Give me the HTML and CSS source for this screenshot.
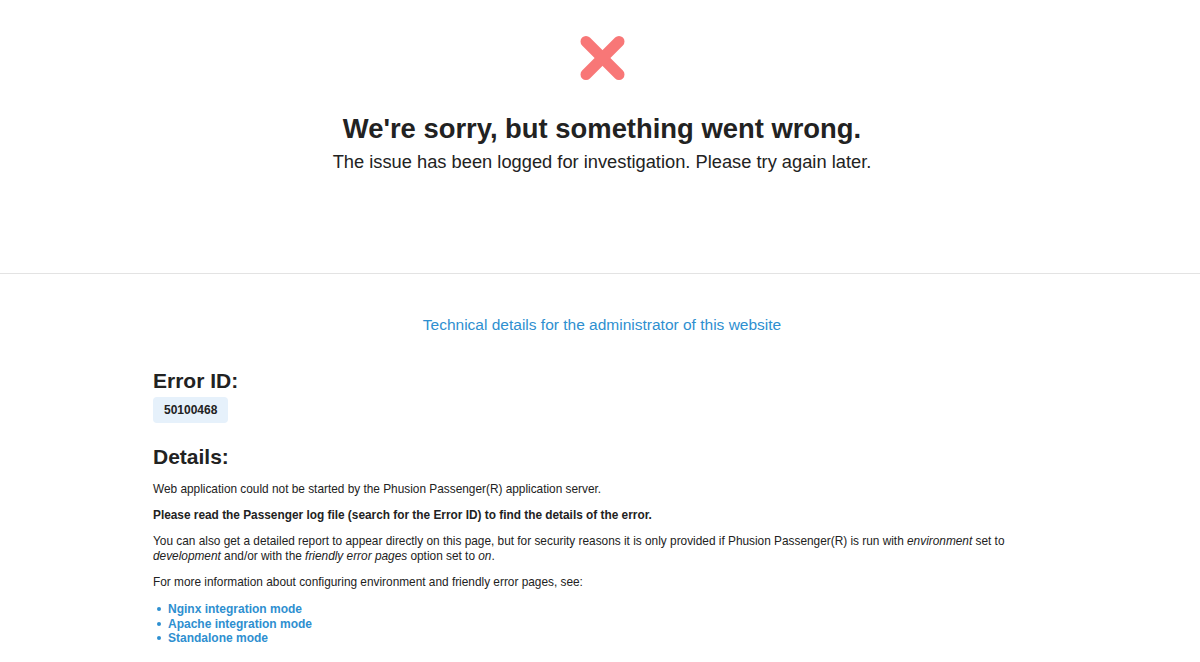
FILE: index.html
```html
<!DOCTYPE html>
<html lang="en">
<head>
<meta charset="utf-8">
<title>We're sorry, but something went wrong</title>
<link rel="stylesheet" href="styles.css">
</head>
<body>
<header class="top">
  <svg class="x-icon" width="48" height="46" viewBox="0 0 48 46" aria-hidden="true">
    <g stroke="#f87777" stroke-width="11" stroke-linecap="round">
      <line x1="8" y1="6.5" x2="41" y2="39.5"/>
      <line x1="41" y1="6.5" x2="8" y2="39.5"/>
    </g>
  </svg>
  <h1 class="title">We're sorry, but something went wrong.</h1>
  <p class="subtitle">The issue has been logged for investigation. Please try again later.</p>
</header>
<main class="tech">
  <p class="tech-link"><a href="#">Technical details for the administrator of this website</a></p>
  <div class="content">
    <h2 class="heading">Error ID:</h2>
    <span class="badge">50100468</span>
    <h2 class="heading details-heading">Details:</h2>
    <p class="para">Web application could not be started by the Phusion Passenger(R) application server.</p>
    <p class="para"><strong>Please read the Passenger log file (search for the Error ID) to find the details of the error.</strong></p>
    <p class="para">You can also get a detailed report to appear directly on this page, but for security reasons it is only provided if Phusion Passenger(R) is run with <em>environment</em> set to <em>development</em> and/or with the <em>friendly error pages</em> option set to <em>on</em>.</p>
    <p class="para">For more information about configuring environment and friendly error pages, see:</p>
    <ul class="links">
      <li><a href="#">Nginx integration mode</a></li>
      <li><a href="#">Apache integration mode</a></li>
      <li><a href="#">Standalone mode</a></li>
    </ul>
  </div>
</main>
</body>
</html>
```
FILE: styles.css
```css
* { box-sizing: border-box; }
html, body { margin: 0; padding: 0; background: #fff; }
body {
  font-family: "Liberation Sans", Arial, sans-serif;
  color: #222;
}
.top {
  display: flex;
  flex-direction: column;
  align-items: center;
  padding-top: 35px;
  padding-left: 4px;
  height: 274px;
  border-bottom: 1px solid #e3e3e3;
}
.x-icon { display: block; margin-left: -1px; }
.title {
  margin: 31px 0 0;
  font-size: 27.4px;
  font-weight: bold;
  line-height: 34px;
  color: #222;
}
.subtitle {
  margin: 5px 0 0;
  font-size: 18.3px;
  line-height: 22px;
  color: #222;
}
.tech { padding-top: 41px; }
.tech-link {
  margin: 0;
  padding-left: 4px;
  text-align: center;
  font-size: 15.5px;
  line-height: 20px;
}
.tech-link a { color: #2e8fd0; text-decoration: none; }
.content {
  width: 894px;
  margin: 0 auto;
  padding-top: 33px;
}
.heading {
  margin: 0;
  font-size: 21px;
  line-height: 26px;
  font-weight: bold;
  color: #222;
}
.badge {
  display: inline-block;
  margin-top: 3px;
  padding: 0 11px;
  height: 26px;
  line-height: 26px;
  border-radius: 4px;
  background: #e6f1fb;
  font-size: 12px;
  font-weight: bold;
  color: #222;
}
.details-heading { margin-top: 21px; }
.para {
  margin: 11px 0 0;
  font-size: 11.85px;
  line-height: 15px;
  color: #222;
}
.details-heading + .para { margin-top: 12px; }
.links {
  margin: 12px 0 0;
  padding-left: 4px;
  list-style: none;
  font-size: 12px;
  line-height: 14.5px;
  color: #2e8fd0;
}
.links li::before {
  content: "";
  display: inline-block;
  width: 4px;
  height: 4px;
  border-radius: 50%;
  background: #2e8fd0;
  margin-right: 7px;
  vertical-align: 2px;
}
.links a { color: #2e8fd0; font-weight: bold; text-decoration: none; }
```
